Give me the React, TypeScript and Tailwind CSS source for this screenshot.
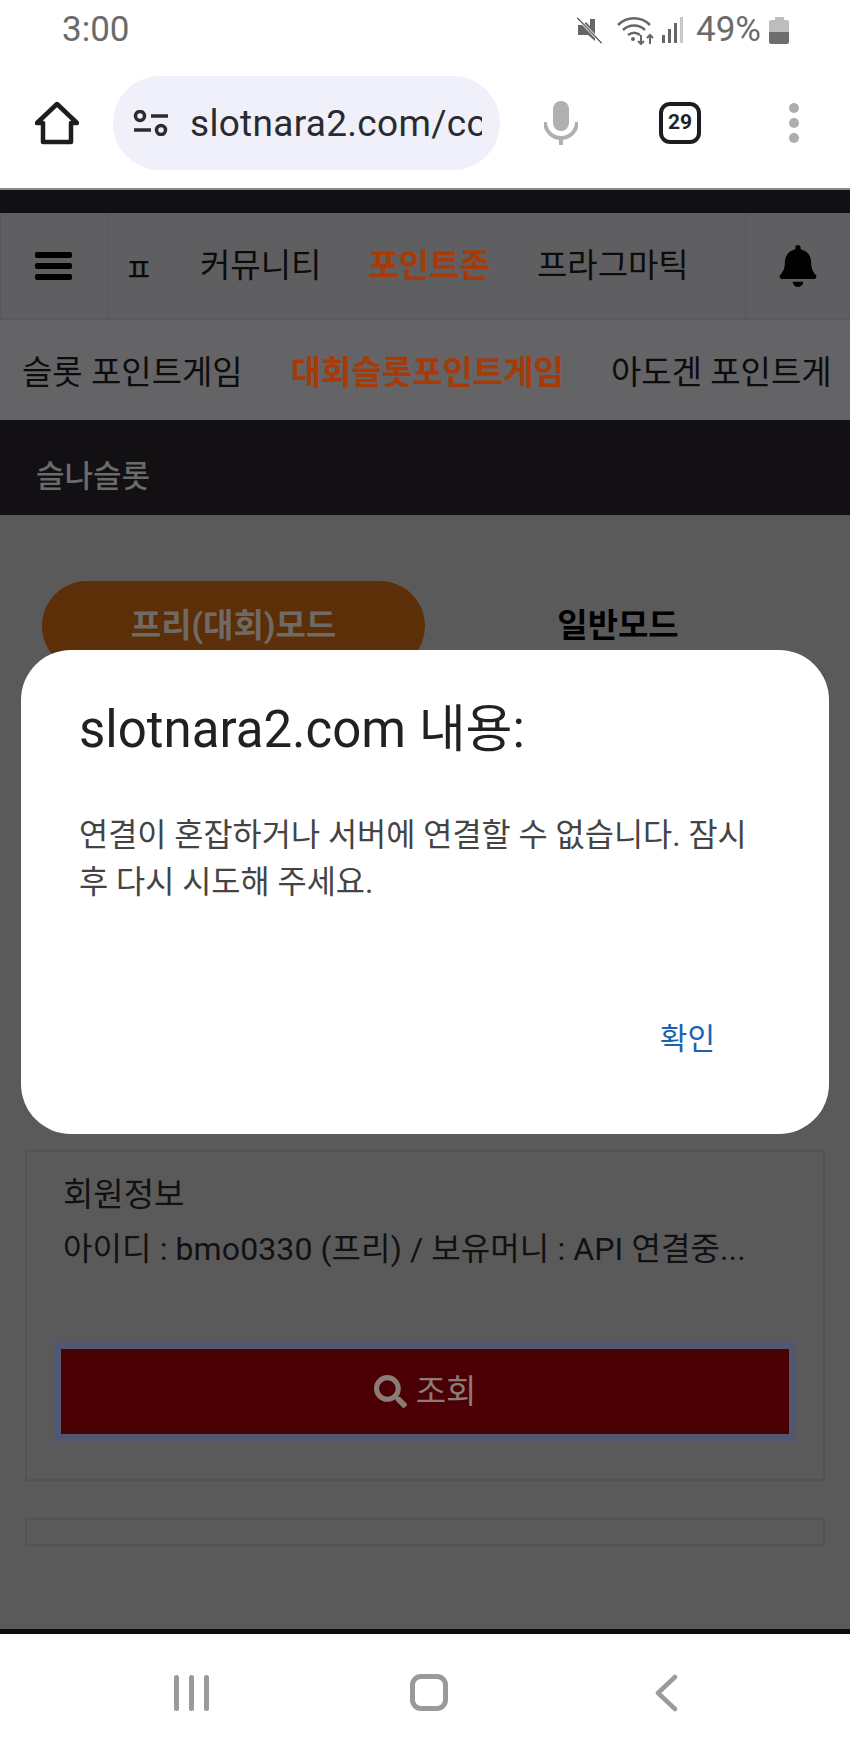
import { FaBell, FaSearch } from 'react-icons/fa';

const FONT = "font-['Roboto','Noto_Sans_CJK_KR',sans-serif]";
const NAV_ITEMS = [
  { label: '커뮤니티', active: false },
  { label: '포인트존', active: true },
  { label: '프라그마틱', active: false },
];

function StatusBar() {
  return (
    <div className="flex h-[60px] items-end justify-between pl-[62px] pr-[61px] pb-[12px] text-[#6b6b6b]">
      <span className="text-[35px] leading-[36px]">3:00</span>
      <div className="flex items-center">
        <svg viewBox="0 0 30 30" className="h-[30px] w-[30px] fill-[#666]">
          <path d="M3 10h5l3-3 9 9v10l-7-6H3z" />
          <path d="M16 4v8l5 5V4z" transform="translate(-1 0)" />
          <path d="M1 3l2-1 25 26-2 1z" stroke="#fff" strokeWidth="1" />
        </svg>
        <svg viewBox="0 0 40 30" className="ml-[12px] h-[30px] w-[40px] fill-none stroke-[#666]">
          <path d="M1 10C10 1 24 1 33 10" strokeWidth="2.5" />
          <path d="M6 15c6-6 16-6 22 0" strokeWidth="2.5" />
          <path d="M11 20c4-3 8-3 12 0" strokeWidth="2.5" />
          <circle cx="16" cy="24" r="2" className="fill-[#666]" strokeWidth="0" />
          <path d="M24 20v9m-3-3 3 3 3-3M33 29v-9m-3 3 3-3 3 3" strokeWidth="2" />
        </svg>
        <div className="ml-[5px] flex h-[26px] items-end gap-[3px]">
          <div className="h-[8px] w-[3px] bg-[#666]" />
          <div className="h-[14px] w-[3px] bg-[#666]" />
          <div className="h-[20px] w-[3px] bg-[#666]" />
          <div className="h-[26px] w-[3px] bg-[#c8c8c8]" />
        </div>
        <span className="ml-[13px] text-[35px] leading-[36px]">49%</span>
        <div className="ml-[8px] flex w-[20px] flex-col items-center">
          <div className="h-[3px] w-[9px] bg-[#bdbdbd]" />
          <div className="h-[12px] w-full rounded-t-[2px] bg-[#bdbdbd]" />
          <div className="h-[12px] w-full rounded-b-[2px] bg-[#6e6e6e]" />
        </div>
      </div>
    </div>
  );
}

function BrowserBar() {
  return (
    <div className="flex h-[128px] items-center pb-[10px] pt-[7px]">
      <svg viewBox="0 0 44 44" className="ml-[35px] h-[44px] w-[44px] fill-none stroke-[#1d1d1f]" strokeWidth="4.5" strokeLinejoin="round">
        <path d="M2 22 22 3l20 19h-6v19H8V22z" />
      </svg>
      <div className="ml-[34px] flex h-[94px] w-[387px] items-center rounded-full bg-[#f0f0fa] pl-[20px] pr-[18px]">
        <svg viewBox="0 0 36 26" className="h-[26px] w-[36px] shrink-0 fill-none stroke-[#2b2b30]" strokeWidth="3.5">
          <circle cx="7" cy="6" r="4.5" />
          <circle cx="28" cy="20" r="4.5" />
          <path d="M18 6h17M1 20h17" />
        </svg>
        <div className="ml-[21px] overflow-hidden whitespace-nowrap pt-[3px] text-[37px] leading-[44px] tracking-[0.3px] text-[#2a2a30]">slotnara2.com/com</div>
      </div>
      <svg viewBox="0 0 34 44" className="ml-[44px] h-[44px] w-[34px] fill-[#b0b0b0]">
        <rect x="9" y="0" width="16" height="30" rx="8" />
        <path d="M1 21a16 16 0 0 0 32 0" fill="none" stroke="#b0b0b0" strokeWidth="4" />
        <rect x="15" y="35" width="4" height="9" />
      </svg>
      <div className="ml-[81px] flex h-[42px] w-[42px] items-center justify-center rounded-[11px] border-[4px] border-[#1d1d1f] text-[21px] font-bold leading-none text-[#222]">29</div>
      <div className="ml-[88px] flex flex-col gap-[5px]">
        <div className="h-[10px] w-[10px] rounded-full bg-[#adadad]" />
        <div className="h-[10px] w-[10px] rounded-full bg-[#adadad]" />
        <div className="h-[10px] w-[10px] rounded-full bg-[#adadad]" />
      </div>
    </div>
  );
}

function SiteNav() {
  return (
    <div className="flex h-[107px] border-b-2 border-[#5a585a] bg-[#5f5e60]">
      <div className="flex w-[108px] shrink-0 items-center justify-center border-r border-l border-[#575658] pr-[2px]">
        <div className="flex w-[37px] flex-col gap-[5px]">
          <div className="h-[6px] rounded-[2px] bg-black" />
          <div className="h-[6px] rounded-[2px] bg-black" />
          <div className="h-[6px] rounded-[2px] bg-black" />
        </div>
      </div>
      <div className="flex flex-1 items-center overflow-hidden">
        <span className="ml-[16px] w-[76px] pt-[9px] text-[32px] leading-none text-[#0a0a0a]">ㅍ</span>
        {NAV_ITEMS.map((item) => (
          <span
            key={item.label}
            className={`mr-[47px] whitespace-nowrap text-[33px] leading-[44px] ${item.active ? 'font-bold text-[#a83a08]' : 'text-[#0c0c0c]'}`}
          >
            {item.label}
          </span>
        ))}
      </div>
      <div className="flex w-[105px] shrink-0 items-center justify-center border-l border-[#575658]">
        <FaBell className="h-[42px] w-[42px] text-black" />
      </div>
    </div>
  );
}

function SubNav() {
  return (
    <div className="flex h-[100px] items-center overflow-hidden whitespace-nowrap bg-[#646365] pl-[22px] pt-[6px] text-[33px] leading-[44px] text-[#0c0c0c]">
      <span>슬롯 포인트게임</span>
      <span className="ml-[48px] font-bold text-[#a83a08]">대회슬롯포인트게임</span>
      <span className="ml-[47px]">아도겐 포인트게</span>
    </div>
  );
}

export default function App() {
  return (
    <div className={`relative flex h-[1747px] w-[850px] flex-col overflow-hidden bg-white ${FONT}`}>
      <StatusBar />
      <BrowserBar />
      <div className="h-[2px] bg-[#8a8a8a]" />
      <div className="h-[23px] bg-[#111113]" />
      <SiteNav />
      <SubNav />
      <div className="flex h-[95px] items-center bg-[#121012] pl-[36px] pt-[18px] text-[31px] font-medium leading-[40px] text-[#6a6a6a]">슬나슬롯</div>

      <div className="flex flex-1 flex-col bg-[#5b5a5b] px-[25px]">
        <div className="mt-[66px] flex h-[90px] items-start">
          <div className="ml-[17px] flex h-[90px] w-[383px] items-center justify-center rounded-[45px] bg-[#5c2f08] text-[33px] font-bold leading-[44px] text-[#6f6a66]">프리(대회)모드</div>
          <div className="flex h-[90px] flex-1 items-center justify-center pr-[14px] text-[33px] font-bold leading-[44px] text-black">일반모드</div>
        </div>

        <div className="mt-[3px] h-[440px] rounded-b-[2px] border border-[#545355]" />

        <div className="mt-[36px] h-[331px] border-2 border-[#535254] pl-[36px] pr-[27px] pt-[21px] text-[#111]">
          <div className="text-[33px] leading-[44px]">회원정보</div>
          <div className="mt-[10px] whitespace-nowrap text-[32px] leading-[44px] tracking-[0.1px]">아이디 : bmo0330 (프리) / 보유머니 : API 연결중...</div>
          <button className="ml-[-9px] mt-[71px] flex h-[99px] w-[742px] items-center justify-center gap-[9px] border-[7px] border-[#4f5870] bg-[#4b0005] text-[33px] leading-[44px] text-[#8a7d78]">
            <FaSearch className="h-[33px] w-[33px]" />
            <span>조회</span>
          </button>
        </div>

        <div className="mt-[37px] h-[28px] border-2 border-[#535254]" />
      </div>

      <div className="h-[5px] bg-[#0d0d0d]" />
      <div className="flex h-[113px] items-center bg-white pt-[4px] pl-[174px]">
        <div className="flex h-[36px] gap-[10px]">
          <div className="w-[5px] rounded-full bg-[#9a9a9a]" />
          <div className="w-[5px] rounded-full bg-[#9a9a9a]" />
          <div className="w-[5px] rounded-full bg-[#9a9a9a]" />
        </div>
        <div className="ml-[201px] h-[37px] w-[38px] rounded-[11px] border-[5px] border-[#9a9a9a]" />
        <svg viewBox="0 0 24 38" className="ml-[206px] h-[38px] w-[24px] fill-none stroke-[#9a9a9a]" strokeWidth="4.5" strokeLinecap="round" strokeLinejoin="round">
          <path d="M21 3 4 19l17 16" />
        </svg>
      </div>

      {/* native alert dialog on top of the dimmed page */}
      <div className="absolute left-[21px] top-[650px] flex h-[484px] w-[808px] flex-col rounded-[50px] bg-white pl-[58px] pr-[80px]">
        <div className="mt-[50px] whitespace-nowrap text-[51px] leading-[60px] text-[#202124]">slotnara2.com 내용:</div>
        <div className="mt-[52px] text-[31.7px] leading-[47px] text-[#444]">연결이 혼잡하거나 서버에 연결할 수 없습니다. 잠시 후 다시 시도해 주세요.</div>
        <div className="mt-[111px] self-end text-[30px] leading-[44px] text-[#1a62b0] mr-[34px]">확인</div>
      </div>
    </div>
  );
}
